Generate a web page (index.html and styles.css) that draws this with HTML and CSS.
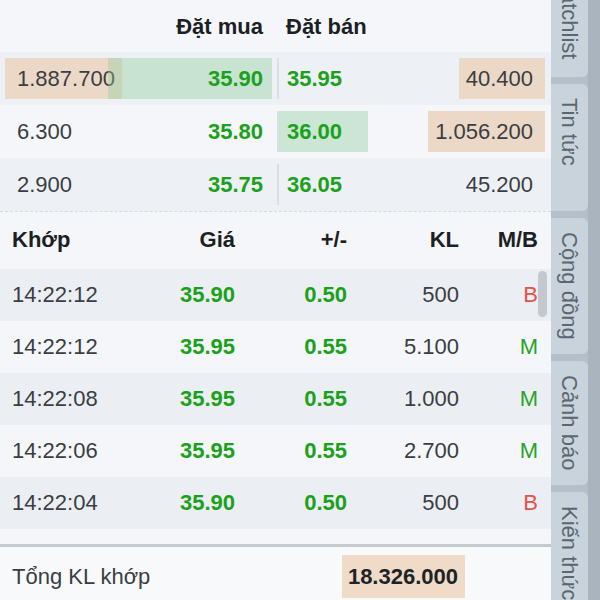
FILE: index.html
```html
<!DOCTYPE html>
<html lang="vi">
<head>
    <meta charset="UTF-8">
    <title>Sổ lệnh</title>
    <link rel="stylesheet" href="styles.css">
</head>
<body>
    <div class="screen">
        <div class="board">
            <!-- Order book -->
            <div class="book">
                <div class="book-row book-head">
                    <div class="bid"><span class="px">Đặt mua</span></div>
                    <div class="ask"><span class="px">Đặt bán</span></div>
                </div>
                <div class="book-row odd">
                    <div class="bid">
                        <span class="vol bar">1.887.700</span>
                        <span class="px up hl overlap">35.90</span>
                    </div>
                    <div class="ask">
                        <span class="px up">35.95</span>
                        <span class="vol bar">40.400</span>
                    </div>
                </div>
                <div class="book-row">
                    <div class="bid">
                        <span class="vol">6.300</span>
                        <span class="px up">35.80</span>
                    </div>
                    <div class="ask">
                        <span class="px up hl">36.00</span>
                        <span class="vol bar">1.056.200</span>
                    </div>
                </div>
                <div class="book-row odd">
                    <div class="bid">
                        <span class="vol">2.900</span>
                        <span class="px up">35.75</span>
                    </div>
                    <div class="ask">
                        <span class="px up">36.05</span>
                        <span class="vol">45.200</span>
                    </div>
                </div>
            </div>

            <!-- Matched trades -->
            <div class="trades">
                <div class="trade-row trade-head">
                    <span class="time">Khớp</span>
                    <span>Giá</span>
                    <span>+/-</span>
                    <span>KL</span>
                    <span>M/B</span>
                </div>
                <div class="trade-row odd">
                    <span class="time">14:22:12</span>
                    <span class="up">35.90</span>
                    <span class="up">0.50</span>
                    <span>500</span>
                    <span class="sell">B</span>
                </div>
                <div class="trade-row">
                    <span class="time">14:22:12</span>
                    <span class="up">35.95</span>
                    <span class="up">0.55</span>
                    <span>5.100</span>
                    <span class="buy">M</span>
                </div>
                <div class="trade-row odd">
                    <span class="time">14:22:08</span>
                    <span class="up">35.95</span>
                    <span class="up">0.55</span>
                    <span>1.000</span>
                    <span class="buy">M</span>
                </div>
                <div class="trade-row">
                    <span class="time">14:22:06</span>
                    <span class="up">35.95</span>
                    <span class="up">0.55</span>
                    <span>2.700</span>
                    <span class="buy">M</span>
                </div>
                <div class="trade-row odd">
                    <span class="time">14:22:04</span>
                    <span class="up">35.90</span>
                    <span class="up">0.50</span>
                    <span>500</span>
                    <span class="sell">B</span>
                </div>
                <div class="scroll-thumb"></div>
            </div>

            <!-- Total -->
            <div class="total">
                <span>Tổng KL khớp</span>
                <span class="total-value">18.326.000</span>
            </div>
        </div>

        <!-- Side tabs -->
        <div class="tabs">
            <div class="tab tab-first">Watchlist</div>
            <div class="tab tab-news">Tin tức</div>
            <div class="tab">Cộng đồng</div>
            <div class="tab">Cảnh báo</div>
            <div class="tab">Kiến thức</div>
        </div>
    </div>
</body>
</html>
```

FILE: styles.css
```css
body {
    margin: 0;
    font-family: 'Liberation Sans', Arial, sans-serif;
    font-size: 22px;
    color: #3a3e43;
    background-color: #f4f6f9;
}

.screen {
    display: flex;
    width: 600px;
    height: 600px;
    overflow: hidden;
}

.board {
    width: 551px;
    display: flex;
    flex-direction: column;
    background-color: #f4f6f9;
}

/* order book */
.book {
    border-bottom: 1px dashed #d3d9df;
}

.book-row {
    display: flex;
    align-items: center;
    height: 53px;
    padding-left: 5px;
}

.book-row.odd {
    background-color: #edf0f4;
}

.book-head {
    height: 52px;
    font-weight: bold;
    color: #1c1f23;
}

.bid {
    display: flex;
    width: 267px;
    height: 41px;
    line-height: 41px;
}

.bid .vol {
    padding: 0 7px 0 12px;
}

.bid .px {
    flex: 1;
    text-align: right;
    padding-right: 9px;
}

.bid .overlap {
    margin-left: -14px;
}

.ask {
    display: flex;
    width: 266px;
    height: 41px;
    line-height: 41px;
    margin-left: 5px;
    border-left: 2px solid #d9e0e5;
}

.book-head .bid,
.book-head .ask {
    border: none;
}

.book-head .ask {
    margin-left: 6px;
}

.ask .px {
    width: 89px;
    padding-left: 8px;
    box-sizing: border-box;
}

.ask .vol {
    margin-left: auto;
    padding: 0 12px 0 7px;
}

.vol.bar {
    background-color: #ecd8c6;
}

.px.hl {
    background-color: rgba(140, 205, 155, 0.38);
}

.up {
    color: #1ba11b;
    font-weight: bold;
}

/* matched trades */
.trades {
    position: relative;
    flex: 1;
    border-bottom: 3px solid #c4c9ce;
}

.trade-row {
    display: grid;
    grid-template-columns: 123px 100px 112px 112px 79px;
    align-items: center;
    height: 52px;
    padding-left: 12px;
    text-align: right;
}

.trade-row.odd {
    background-color: #ebeef2;
}

.trade-head {
    height: 57px;
    padding-bottom: 2px;
    box-sizing: border-box;
    font-weight: bold;
    color: #1c1f23;
}

.trade-row .time {
    text-align: left;
}

.sell {
    color: #e5524b;
}

.buy {
    color: #28a428;
}

.scroll-thumb {
    position: absolute;
    top: 59px;
    left: 538px;
    width: 9px;
    height: 46px;
    border-radius: 5px;
    background-color: #c3c8cd;
}

/* total */
.total {
    display: grid;
    grid-template-columns: 330px 123px;
    align-items: center;
    height: 53px;
    padding: 8px 0 2px 12px;
    box-sizing: border-box;
    background-color: #f8f9fb;
}

.total-value {
    height: 43px;
    line-height: 43px;
    text-align: right;
    padding-right: 7px;
    font-weight: bold;
    color: #202326;
    background-color: #efdbc8;
}

/* side tabs */
.tabs {
    width: 49px;
    display: flex;
    flex-direction: column;
    gap: 7px;
    background-color: #b4bfca;
    border-right: 12px solid #a9b4bf;
    box-sizing: border-box;
}

.tab {
    flex-shrink: 0;
    width: 37px;
    padding: 14px 0;
    writing-mode: vertical-rl;
    line-height: 37px;
    color: #5b6670;
    background-color: #c9d3dc;
    border-radius: 0 6px 6px 0;
}

.tab-first {
    margin-top: -43px;
    padding-bottom: 18px;
}

.tab-news {
    height: 99px;
}
```
